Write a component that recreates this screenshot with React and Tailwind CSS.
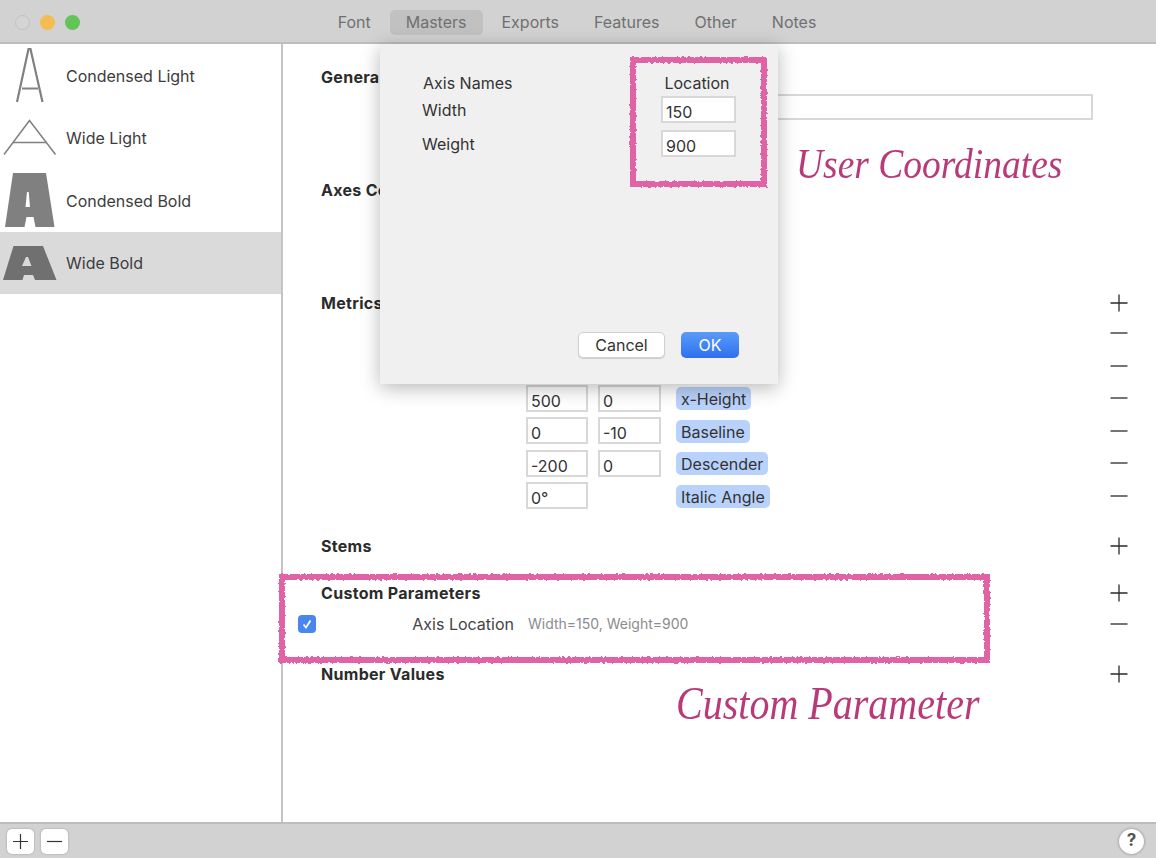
const FONT = "font-['Inter','Liberation_Sans',sans-serif]";

function RoughFrame({ className, w, h, id }) {
  return (
    <svg className={className} width={w + 10} height={h + 10} viewBox={`0 0 ${w + 10} ${h + 10}`} fill="none">
      <defs>
        <filter id={id} x="-5%" y="-5%" width="110%" height="110%">
          <feTurbulence type="fractalNoise" baseFrequency="0.35" numOctaves="2" seed="4" />
          <feDisplacementMap in="SourceGraphic" scale="3.5" />
        </filter>
      </defs>
      <rect x="5" y="5" width={w} height={h} stroke="#e063a6" strokeWidth="6" filter={`url(#${id})`} />
    </svg>
  );
}

const glyphs = [
  <svg key="a" width="60" height="62" viewBox="0 0 60 62" fill="none" stroke="#808080">
    <path d="M17 57 L28.5 4 H30.5 L42.5 57" strokeWidth="2.2" />
    <path d="M22 43.5 H38" strokeWidth="2" />
  </svg>,
  <svg key="b" width="60" height="62" viewBox="0 0 60 62" fill="none" stroke="#808080">
    <path d="M4 47.5 L29.5 13.5 L55.5 47.5" strokeWidth="1.5" />
    <path d="M13 35.5 H47" strokeWidth="1.5" />
  </svg>,
  <svg key="c" width="60" height="62" viewBox="0 0 60 62" fill="#808080">
    <path fillRule="evenodd" d="M13 3 H46 L54.5 57 H35.5 L33.5 47 H26.5 L24.5 57 H5 Z M27 22 L25.5 37 H30 L28.7 22 Z" />
  </svg>,
  <svg key="d" width="60" height="62" viewBox="0 0 60 62" fill="#707070">
    <path fillRule="evenodd" d="M13.5 14 H43 L56.5 48 H35 L33 43 H24 L22.5 48 H3 Z M26 25 L22 34 H31.5 L28 25 Z" />
  </svg>,
];

const masters = ["Condensed Light", "Wide Light", "Condensed Bold", "Wide Bold"];
const tabs = ["Font", "Masters", "Exports", "Features", "Other", "Notes"];
const metricRows = [
  { a: "", b: "", tag: "" },
  { a: "", b: "", tag: "" },
  { a: "500", b: "0", tag: "x-Height" },
  { a: "0", b: "-10", tag: "Baseline" },
  { a: "-200", b: "0", tag: "Descender" },
  { a: "0°", b: null, tag: "Italic Angle" },
];

function PlusIcon() {
  return (
    <svg width="18" height="18" viewBox="0 0 18 18" stroke="#2a2a2a" strokeWidth="1.3">
      <path d="M0.5 9 H17.5 M9 0.5 V17.5" />
    </svg>
  );
}
function MinusIcon() {
  return (
    <svg width="18" height="18" viewBox="0 0 18 18" stroke="#2a2a2a" strokeWidth="1.3">
      <path d="M0.5 9 H17.5" />
    </svg>
  );
}

function Field({ value, className }) {
  return (
    <div className={`h-[27px] border-2 border-[#d8d8d8] bg-white pl-[3px] text-[16px] leading-[28px] text-[#333] ${className}`}>
      {value}
    </div>
  );
}

function Heading({ children }) {
  return <div className="h-5 text-[16px] leading-5 font-bold tracking-[0.3px] text-[#2b2b2b]">{children}</div>;
}

function HeadingRow({ children, className, icon = true }) {
  return (
    <div className={`flex h-5 items-center justify-between ${className}`}>
      <Heading>{children}</Heading>
      {icon && <PlusIcon />}
    </div>
  );
}

export default function App() {
  return (
    <div className={`relative flex h-[858px] w-[1156px] flex-col overflow-hidden bg-white ${FONT}`}>
      {/* Title bar */}
      <header className="relative flex h-11 shrink-0 items-start justify-center border-b-2 border-[#bdbdbd] bg-[#d2d2d2] pt-[10px]">
        <div className="absolute top-[14.5px] left-[14.5px] flex gap-[10px]">
          <span className="h-[15px] w-[15px] rounded-full border border-[#c2c2c2] bg-[#d4d4d4]" />
          <span className="h-[15px] w-[15px] rounded-full bg-[#f5bd4f]" />
          <span className="h-[15px] w-[15px] rounded-full bg-[#61c454]" />
        </div>
        <nav className="-ml-[2px] flex gap-[3px]">
          {tabs.map((t) => (
            <div
              key={t}
              className={`h-[25px] rounded-[5px] px-4 text-[16px] leading-[25px] text-[#707070] ${t === "Masters" ? "bg-[#c1c1c1]" : ""}`}
            >
              {t}
            </div>
          ))}
        </nav>
      </header>

      <div className="flex min-h-0 flex-1">
        {/* Sidebar */}
        <aside className="w-[283px] shrink-0 border-r-2 border-[#c4c4c4]">
          {masters.map((m, i) => (
            <div key={m} className={`flex h-[62.5px] items-center pt-px ${i === 3 ? "bg-[#dadada]" : ""}`}>
              {glyphs[i]}
              <span className="ml-1.5 text-[16px] text-[#3c3c3c]">{m}</span>
            </div>
          ))}
        </aside>

        {/* Main form */}
        <main className="flex-1 pt-[23px] pr-[28px] pl-[38px]">
          <Heading>General</Heading>
          <div className="mt-[7px] mr-[35px] ml-[205px] h-[26px] border-2 border-[#d8d8d8] bg-white" />

          <div className="mt-[60px]">
            <Heading>Axes Coordinates</Heading>
          </div>

          <HeadingRow className="mt-[93px]">Metrics</HeadingRow>
          <div className="mt-[6.5px] flex flex-col gap-[5.5px]">
            {metricRows.map((r, i) => (
              <div key={i} className="flex h-[27px] items-center pl-[205px]">
                <Field value={r.a} className="w-[62px]" />
                {r.b !== null ? <Field value={r.b} className="ml-[10px] w-[63px]" /> : <div className="ml-[10px] w-[63px]" />}
                {r.tag && (
                  <span className="mt-[1px] ml-[15px] h-[23px] rounded-[5px] bg-[#b9d2fb] px-[5px] text-[16px] leading-[25px] text-[#333]">
                    {r.tag}
                  </span>
                )}
                <span className="ml-auto">
                  <MinusIcon />
                </span>
              </div>
            ))}
          </div>

          <HeadingRow className="mt-[26.5px]">Stems</HeadingRow>
          <HeadingRow className="mt-[27px]">Custom Parameters</HeadingRow>

          <div className="mt-2 -ml-[23px] flex h-[26px] items-center">
            <span className="flex h-[18px] w-[18px] items-center justify-center rounded-[4px] bg-[#4a86f0]">
              <svg width="12" height="12" viewBox="0 0 12 12" fill="none" stroke="#fff" strokeWidth="1.7">
                <path d="M2.5 6.5 L5 9.5 L9.5 2.5" />
              </svg>
            </span>
            <span className="w-[198px] text-right text-[16px] text-[#444]">Axis Location</span>
            <span className="ml-3.5 text-[14px] text-[#8c8c8c]">Width=150, Weight=900</span>
            <span className="ml-auto">
              <MinusIcon />
            </span>
          </div>

          <HeadingRow className="mt-[27px]">Number Values</HeadingRow>
        </main>
      </div>

      {/* Bottom bar */}
      <footer className="flex h-9 shrink-0 items-center border-t-2 border-[#bdbdbd] bg-[#d2d2d2] pr-3 pl-[7px]">
        <button className="flex h-[25px] w-[27px] items-center justify-center rounded-[5px] bg-white shadow-[0_0_2px_rgba(0,0,0,0.3)]">
          <svg width="15" height="15" viewBox="0 0 15 15" stroke="#333" strokeWidth="1.2">
            <path d="M0 7.5 H15 M7.5 0 V15" />
          </svg>
        </button>
        <button className="ml-[7px] flex h-[25px] w-[27px] items-center justify-center rounded-[5px] bg-white shadow-[0_0_2px_rgba(0,0,0,0.3)]">
          <svg width="15" height="15" viewBox="0 0 15 15" stroke="#333" strokeWidth="1.2">
            <path d="M0 7.5 H15" />
          </svg>
        </button>
        <button className="ml-auto flex h-[25px] w-[25px] items-center justify-center rounded-full bg-white text-[17px] font-bold text-[#555] shadow-[0_0_3px_rgba(0,0,0,0.4)]">
          ?
        </button>
      </footer>

      {/* Sheet dialog */}
      <section className="absolute top-[44px] left-[380px] flex h-[340px] w-[398px] flex-col bg-[#f0f0f0] px-[42px] pt-[29px] shadow-[0_4px_18px_rgba(0,0,0,0.28)]">
        <div className="flex items-start text-[16px] leading-5 text-[#333]">
          <div className="flex-1">
            <div className="pl-px">Axis Names</div>
            <div className="mt-[7px]">Width</div>
            <div className="mt-[14px]">Weight</div>
          </div>
          <div className="flex w-[75px] flex-col items-center">
            <div className="-ml-[3px]">Location</div>
            <Field value="150" className="mt-[3px] w-[75px]" />
            <Field value="900" className="mt-[7px] w-[75px]" />
          </div>
        </div>
        <div className="-mr-[3px] mt-auto mb-[26px] flex justify-end gap-4 text-[16px]">
          <button className="h-[26px] w-[87px] rounded-[5px] border border-[#d0d0d0] bg-white text-[#333] shadow-[0_1px_1px_rgba(0,0,0,0.15)]">
            Cancel
          </button>
          <button className="h-[26px] w-[58px] rounded-[5px] bg-gradient-to-b from-[#5a9bf7] to-[#2f6ff0] text-white">
            OK
          </button>
        </div>
      </section>

      {/* Annotations */}
      <RoughFrame id="f1" className="absolute top-[55px] left-[628px]" w={131} h={124} />
      <RoughFrame id="f2" className="absolute top-[572px] left-[277px]" w={705} h={83} />
      <span className="absolute top-[139px] left-[796px] origin-left scale-x-[0.893] font-['Liberation_Serif',serif] text-[42px] leading-[50px] whitespace-nowrap text-[#b93a78] italic">
        User Coordinates
      </span>
      <span className="absolute top-[679px] left-[676px] origin-left scale-x-[0.87] font-['Liberation_Serif',serif] text-[46px] leading-[50px] whitespace-nowrap text-[#b93a78] italic">
        Custom Parameter
      </span>
    </div>
  );
}
